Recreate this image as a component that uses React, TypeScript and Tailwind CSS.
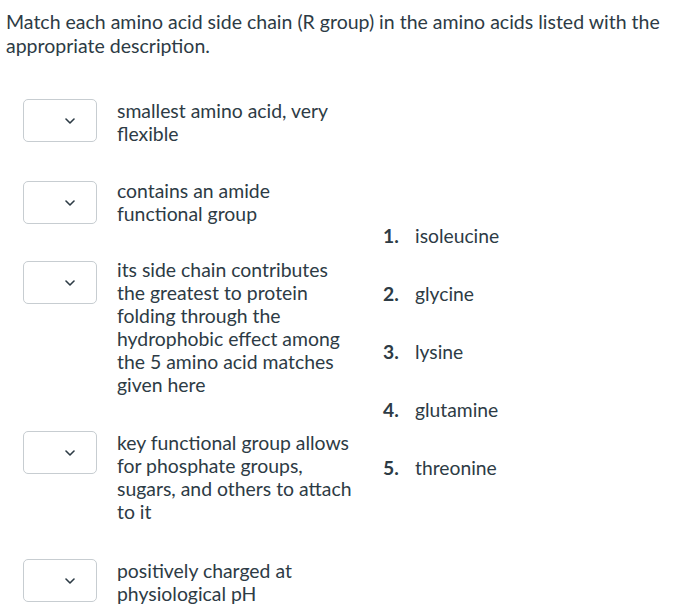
import React from 'react';

const rows = [
  { text: 'smallest amino acid, very flexible', mt: 'mt-[41px]', tt: 'mt-0' },
  { text: 'contains an amide functional group', mt: 'mt-[36px]', tt: 'mt-[-2px]' },
  { text: 'its side chain contributes the greatest to protein folding through the hydrophobic effect among the 5 amino acid matches given here', mt: 'mt-[36px]', tt: 'mt-[-3px]' },
  { text: 'key functional group allows for phosphate groups, sugars, and others to attach to it', mt: 'mt-[35px]', tt: 'mt-0' },
  { text: 'positively charged at physiological pH', mt: 'mt-[36px]', tt: 'mt-0' },
];

const answers = ['isoleucine', 'glycine', 'lysine', 'glutamine', 'threonine'];

function Chevron() {
  return (
    <svg width="10" height="6" viewBox="0 0 10 6" fill="none">
      <path d="M1 1l4 4 4-4" stroke="#2d3b45" strokeWidth="1.6" strokeLinecap="round" strokeLinejoin="round" />
    </svg>
  );
}

export default function App() {
  return (
    <div className="w-[678px] h-[611px] bg-white text-[#2d3b45] overflow-hidden" style={{ fontFamily: 'Lato, "Noto Sans", sans-serif' }}>
      <p className="px-[6px] pt-[10px] text-[19.5px] leading-[24px]">
        Match each amino acid side chain (R group) in the amino acids listed with the appropriate description.
      </p>
      <div className="flex">
        <div className="flex flex-col pl-[23px]">
          {rows.map((r) => (
            <div key={r.text} className={`flex items-start ${r.mt}`}>
              <div className="w-[74px] h-[43px] border border-[#c7cdd1] rounded-[5px] flex items-center justify-end pr-[21px] shrink-0">
                <Chevron />
              </div>
              <p className={`ml-[20px] w-[242px] text-[19.4px] leading-[23px] ${r.tt}`}>{r.text}</p>
            </div>
          ))}
        </div>
        <ol className="ml-[24px] pt-[166px] flex flex-col gap-[34px] text-[19.3px] leading-[24px]">
          {answers.map((a, i) => (
            <li key={a} className="flex">
              <span className="w-[32px] font-bold">{i + 1}.</span>
              <span>{a}</span>
            </li>
          ))}
        </ol>
      </div>
    </div>
  );
}
